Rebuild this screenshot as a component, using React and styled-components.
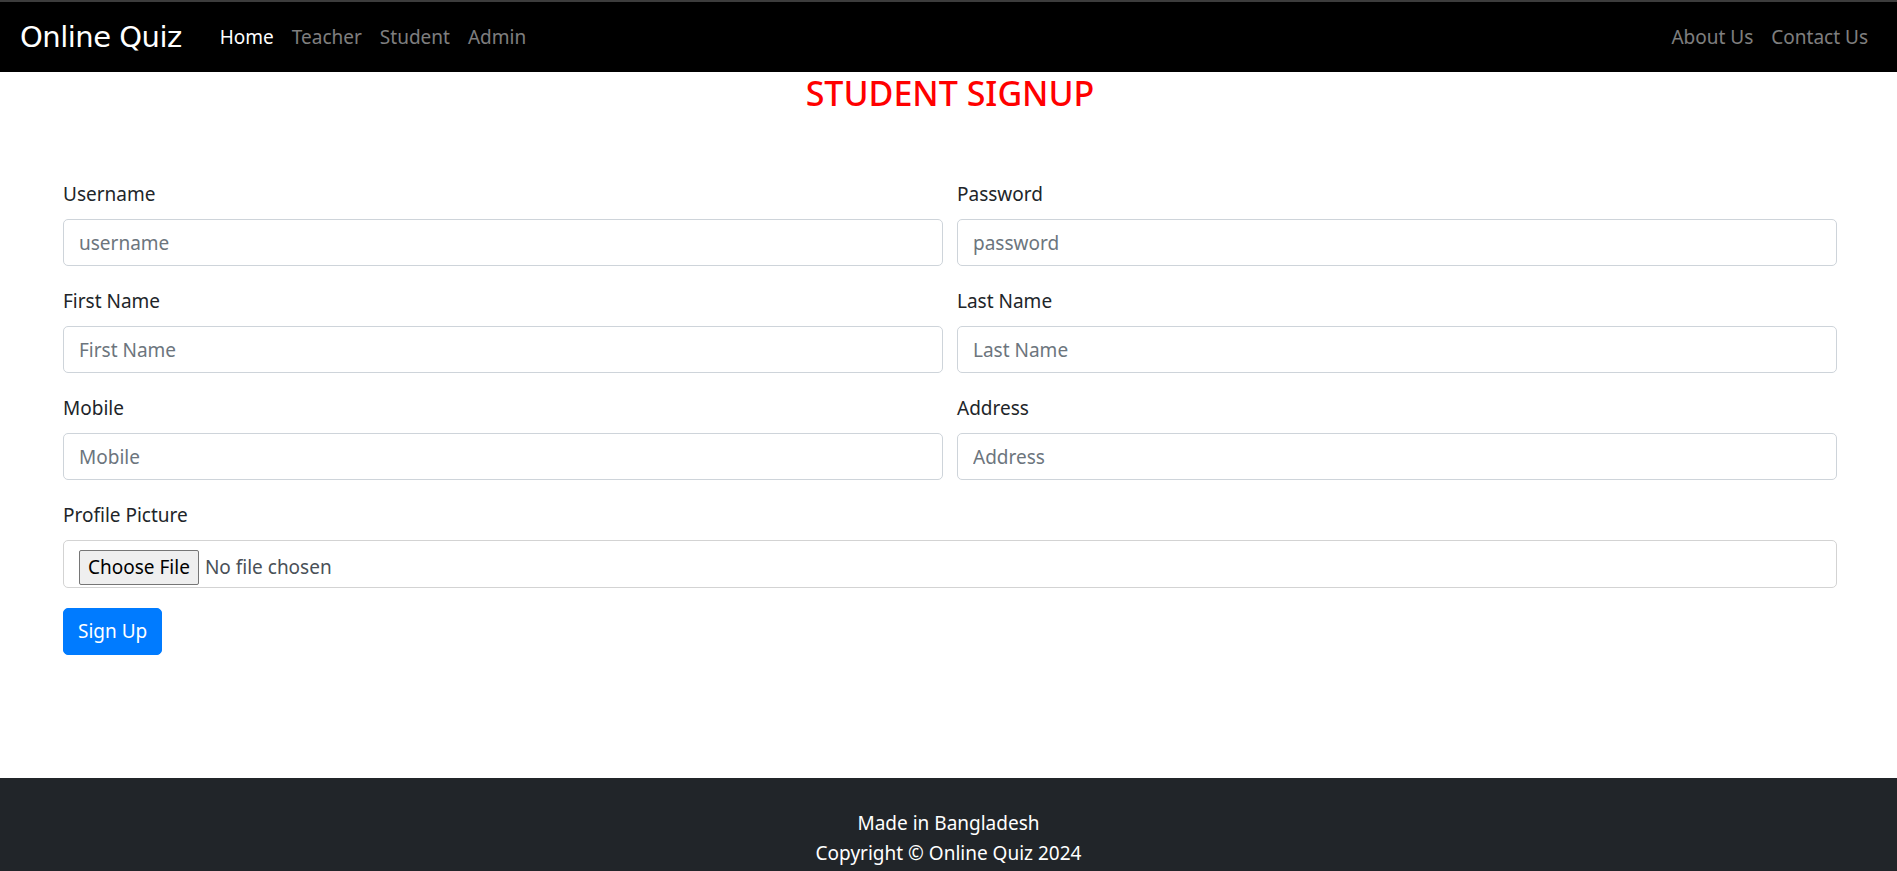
import React from 'react';
import styled, { createGlobalStyle } from 'styled-components';

const fields = [
  { label: 'Username', placeholder: 'username', type: 'text' },
  { label: 'Password', placeholder: 'password', type: 'password' },
  { label: 'First Name', placeholder: 'First Name', type: 'text' },
  { label: 'Last Name', placeholder: 'Last Name', type: 'text' },
  { label: 'Mobile', placeholder: 'Mobile', type: 'text' },
  { label: 'Address', placeholder: 'Address', type: 'text' },
];

const App = () => (
  <>
    <GlobalStyle />
    <Navbar>
      <Brand href="#">Online Quiz</Brand>
      <NavList>
        <NavLink href="#" active>Home</NavLink>
        <NavLink href="#">Teacher</NavLink>
        <NavLink href="#">Student</NavLink>
        <NavLink href="#">Admin</NavLink>
      </NavList>
      <NavList right>
        <NavLink href="#">About Us</NavLink>
        <NavLink href="#">Contact Us</NavLink>
      </NavList>
    </Navbar>

    <Main>
      <Title>STUDENT SIGNUP</Title>
      <Form onSubmit={(e) => e.preventDefault()}>
        <FieldGrid>
          {fields.map((f) => (
            <Field key={f.label}>
              <Label>{f.label}</Label>
              <Input type={f.type} placeholder={f.placeholder} />
            </Field>
          ))}
          <Field wide>
            <Label>Profile Picture</Label>
            <FileBox>
              <HiddenFile type="file" />
              <FileButton>Choose File</FileButton>
              <FileName>No file chosen</FileName>
            </FileBox>
          </Field>
        </FieldGrid>
        <SubmitButton type="submit">Sign Up</SubmitButton>
      </Form>
    </Main>

    <Footer>
      <div>Made in Bangladesh</div>
      <div>Copyright © Online Quiz 2024</div>
    </Footer>
  </>
);

export default App;

// Styles
const GlobalStyle = createGlobalStyle`
  * { box-sizing: border-box; }
  body {
    margin: 0;
    font-family: "Noto Sans", "Open Sans", sans-serif;
    font-size: 20px;
    line-height: 1.5;
    color: #212529;
    background: #fff;
  }
`;

const Navbar = styled.nav`
  display: flex;
  align-items: center;
  height: 72px;
  padding: 0 20px 0 20px;
  background: #000;
  border-top: 2px solid #3c3c3c;
`;

const Brand = styled.a`
  font-family: "DejaVu Sans", sans-serif;
  font-size: 29px;
  line-height: 38px;
  margin-right: 29px;
  color: #fff;
  text-decoration: none;
  letter-spacing: -0.5px;
`;

const NavList = styled.div`
  display: flex;
  margin-left: ${(p) => (p.right ? 'auto' : '0')};
`;

const NavLink = styled.a`
  padding: 0 9px;
  color: ${(p) => (p.active ? '#fff' : 'rgba(255,255,255,.5)')};
  text-decoration: none;
  font-size: 19px;
`;

const Main = styled.main`
  padding: 0 60px 0 63px;
  margin-bottom: 123px;
`;

const Title = styled.h3`
  margin: 0 0 65px;
  text-align: center;
  color: #ff0000;
  font-size: 34px;
  font-weight: 500;
  line-height: 42px;
`;

const Form = styled.form`
  display: flex;
  flex-direction: column;
  align-items: flex-start;
  gap: 20px;
`;

const FieldGrid = styled.div`
  width: 100%;
  display: grid;
  grid-template-columns: 1fr 1fr;
  column-gap: 14px;
  row-gap: 20px;
`;

const Field = styled.div`
  grid-column: ${(p) => (p.wide ? '1 / -1' : 'auto')};
`;

const Label = styled.label`
  display: block;
  margin-bottom: 10px;
  line-height: 30px;
  font-size: 19px;
`;

const Input = styled.input`
  display: block;
  width: 100%;
  height: 47px;
  padding: 7.5px 15px;
  font: inherit;
  font-size: 19px;
  color: #495057;
  border: 1px solid #ced4da;
  border-radius: 5px;
  outline: none;
  &::placeholder { color: #6c757d; }
`;

const FileBox = styled.label`
  display: flex;
  align-items: center;
  gap: 6px;
  height: 48px;
  padding: 7px 15px 0;
  border: 1px solid #d3d3d3;
  border-radius: 5px;
  cursor: pointer;
`;

const HiddenFile = styled.input`
  display: none;
`;

const FileButton = styled.span`
  display: inline-flex;
  align-items: center;
  height: 35px;
  padding: 0 8px;
  background: #efefef;
  border: 1px solid #767676;
  border-radius: 2px;
  color: #000;
  font-size: 19px;
`;

const FileName = styled.span`
  color: #495057;
  font-size: 19px;
`;

const SubmitButton = styled.button`
  height: 47px;
  padding: 0 14px;
  font: inherit;
  font-size: 19px;
  color: #fff;
  background: #007bff;
  border: 1px solid #007bff;
  border-radius: 5px;
  cursor: pointer;
`;

const Footer = styled.footer`
  padding: 30px 0;
  background: #212529;
  color: #fff;
  text-align: center;
  line-height: 30px;
  font-size: 19px;
`;
